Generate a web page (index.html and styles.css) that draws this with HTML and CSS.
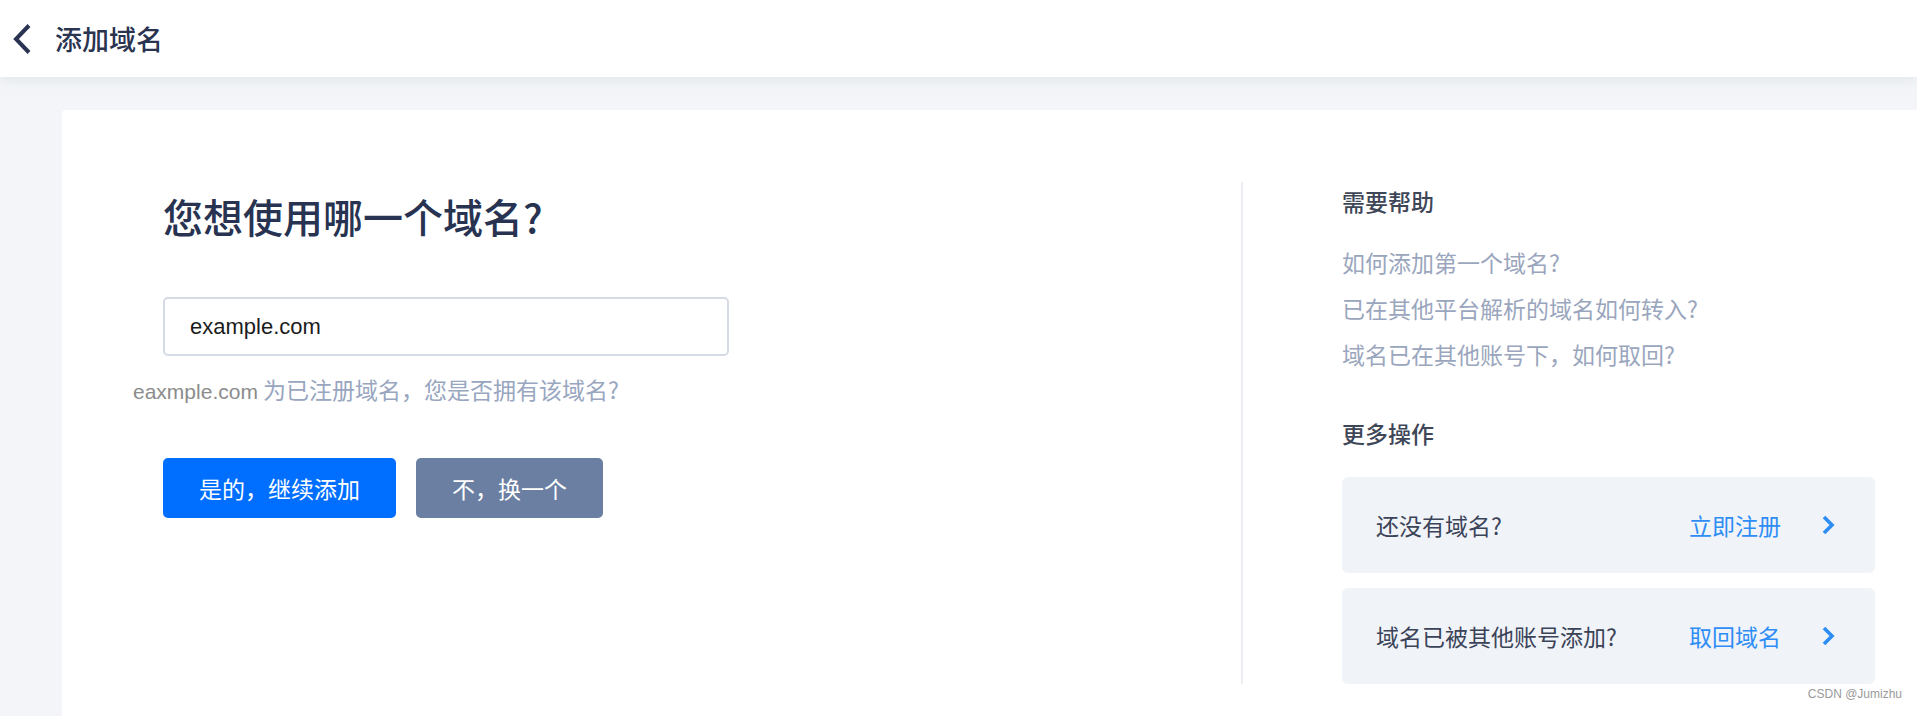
FILE: index.html
```html
<!DOCTYPE html>
<html lang="zh-CN">
<head>
<meta charset="utf-8">
<title>添加域名</title>
<link rel="stylesheet" href="styles.css">
</head>
<body>
<header class="topbar">
  <svg class="back" width="22" height="34" viewBox="0 0 22 34"><polyline points="18,3.5 5,17 18,30.5" fill="none" stroke="#2a3352" stroke-width="4" stroke-linejoin="miter"/></svg>
  <h1 class="title">添加域名</h1>
</header>
<main class="page">
  <section class="card">
    <div class="left">
      <h2 class="question">您想使用哪一个域名?</h2>
      <div class="input">example.com</div>
      <p class="hint"><span class="hint-domain">eaxmple.com</span> 为已注册域名，您是否拥有该域名?</p>
      <div class="actions">
        <button class="btn btn-primary">是的，继续添加</button>
        <button class="btn btn-secondary">不，换一个</button>
      </div>
    </div>
    <aside class="right">
      <h3 class="side-title">需要帮助</h3>
      <ul class="help">
        <li>如何添加第一个域名?</li>
        <li>已在其他平台解析的域名如何转入?</li>
        <li>域名已在其他账号下，如何取回?</li>
      </ul>
      <h3 class="side-title more">更多操作</h3>
      <div class="op">
        <span class="op-text">还没有域名?</span>
        <span class="op-link">立即注册</span>
        <svg class="op-arrow" width="14" height="22" viewBox="0 0 14 22"><polyline points="3,3 11,11 3,19" fill="none" stroke="#2e8df5" stroke-width="3.6"/></svg>
      </div>
      <div class="op">
        <span class="op-text">域名已被其他账号添加?</span>
        <span class="op-link">取回域名</span>
        <svg class="op-arrow" width="14" height="22" viewBox="0 0 14 22"><polyline points="3,3 11,11 3,19" fill="none" stroke="#2e8df5" stroke-width="3.6"/></svg>
      </div>
    </aside>
  </section>
</main>
<div class="watermark">CSDN @Jumizhu</div>
</body>
</html>
```

FILE: styles.css
```css
* { box-sizing: border-box; }
html, body {
  margin: 0;
  padding: 0;
  height: 716px;
  overflow: hidden;
}
body {
  font-family: "Liberation Sans", "Noto Sans CJK SC", sans-serif;
  background: #f3f5f8;
  position: relative;
}
.topbar {
  height: 77px;
  background: #ffffff;
  display: flex;
  align-items: center;
  padding-left: 11px;
  box-shadow: 0 3px 12px rgba(30, 45, 80, 0.08);
  position: relative;
  z-index: 1;
}
.back { display: block; }
.title {
  margin: 0 0 0 22px;
  font-family: "Noto Sans CJK SC", sans-serif;
  font-size: 27px;
  line-height: 27px;
  font-weight: 500;
  color: #2a3350;
}
.page {
  padding: 33px 0 0 62px;
}
.card {
  background: #ffffff;
  border-radius: 4px 0 0 0;
  display: flex;
  padding-top: 72px;
  padding-bottom: 80px;
}
.left {
  width: 1179px;
  padding-left: 101px;
}
.question {
  margin: 14px 0 0;
  font-family: "Noto Sans CJK SC", sans-serif;
  font-size: 40px;
  line-height: 40px;
  font-weight: 500;
  color: #283352;
}
.input {
  margin-top: 61px;
  width: 566px;
  height: 59px;
  border: 2px solid #d5dbe5;
  border-radius: 5px;
  padding-left: 25px;
  display: flex;
  align-items: center;
  font-size: 22px;
  color: #1c1c1c;
}
.hint {
  margin: 22px 0 0 -30px;
  font-family: "Noto Sans CJK SC", sans-serif;
  font-size: 23px;
  line-height: 23px;
  color: #98a6bf;
}
.hint-domain {
  font-family: "Liberation Sans", sans-serif;
  font-size: 21px;
  color: #8c8c8c;
}
.actions {
  margin-top: 55px;
  display: flex;
  gap: 20px;
}
.btn {
  height: 60px;
  padding: 0 36px;
  border: none;
  border-radius: 5px;
  font-family: "Noto Sans CJK SC", sans-serif;
  font-size: 23px;
  color: #ffffff;
  cursor: pointer;
}
.btn-primary { background: #006eff; }
.btn-secondary { background: #6a7fa2; }
.right {
  width: 676px;
  border-left: 2px solid #eceef1;
  padding-left: 99px;
  padding-right: 42px;
}
.side-title {
  margin: 8px 0 0;
  font-family: "Noto Sans CJK SC", sans-serif;
  font-size: 23px;
  line-height: 23px;
  font-weight: 500;
  color: #3e4758;
}
.help {
  list-style: none;
  margin: 26px 0 0;
  padding: 0;
}
.help li {
  font-family: "Noto Sans CJK SC", sans-serif;
  font-size: 23px;
  line-height: 46px;
  color: #9aa6bd;
}
.side-title.more { margin-top: 45px; }
.op {
  height: 96px;
  background: #f0f4f9;
  border-radius: 6px;
  display: flex;
  align-items: center;
  padding: 0 40px 0 34px;
  margin-top: 15px;
  font-family: "Noto Sans CJK SC", sans-serif;
  font-size: 23px;
}
.more + .op { margin-top: 32px; }
.op-text {
  flex: 1;
  color: #3b4358;
}
.op-link {
  color: #2e8df5;
  margin-right: 40px;
}
.op-arrow { display: block; }
.watermark {
  position: absolute;
  right: 15px;
  bottom: 15px;
  font-family: "Liberation Sans", sans-serif;
  font-size: 12px;
  line-height: 14px;
  color: #9a9a9a;
}
```
